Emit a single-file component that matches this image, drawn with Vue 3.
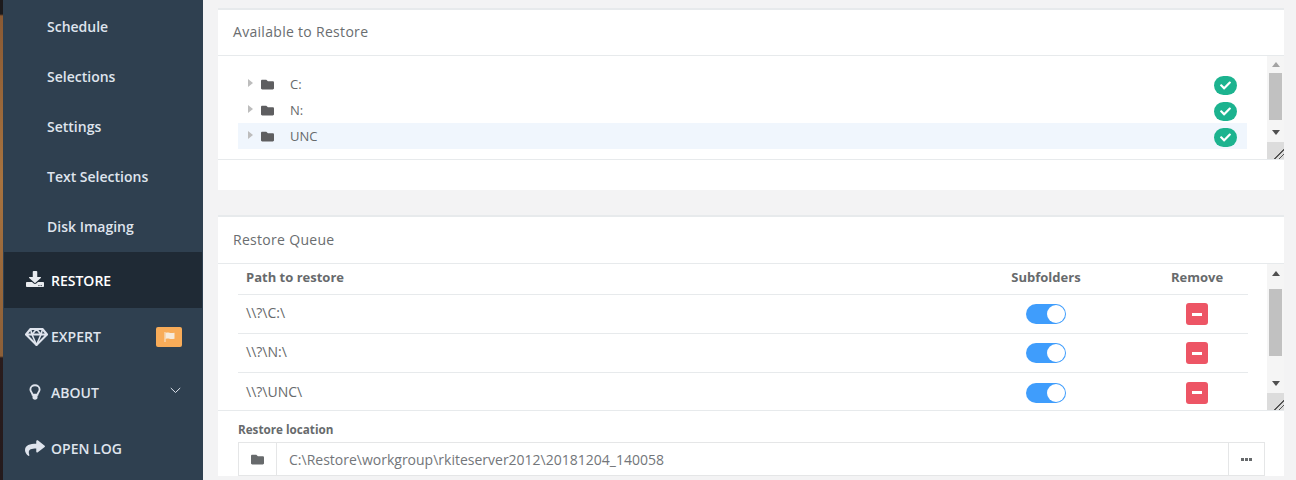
<script setup>
const navSub = ['Schedule', 'Selections', 'Settings', 'Text Selections', 'Disk Imaging']
const tree = [
  { name: 'C:', active: false },
  { name: 'N:', active: false },
  { name: 'UNC', active: true }
]
const queue = ['\\\\?\\C:\\', '\\\\?\\N:\\', '\\\\?\\UNC\\']
const folder = 'M464 128H272l-64-64H48C21.49 64 0 85.49 0 112v288c0 26.51 21.49 48 48 48h416c26.51 0 48-21.49 48-48V176c0-26.51-21.49-48-48-48z'
const check = 'M173.898 439.404l-166.4-166.4c-9.997-9.997-9.997-26.206 0-36.204l36.203-36.204c9.997-9.998 26.207-9.998 36.204 0L192 312.69 432.095 72.596c9.997-9.997 26.207-9.997 36.204 0l36.203 36.204c9.997 9.997 9.997 26.206 0 36.204l-294.4 294.401c-9.998 9.997-26.207 9.997-36.204-.001z'
</script>

<template>
  <div class="root">
    <div class="strip"></div>
    <aside class="side">
      <a v-for="n in navSub" :key="n" class="sub">{{ n }}</a>
      <a class="top active">
        <span class="ic"><svg width="18" height="16" viewBox="0 0 512 512" preserveAspectRatio="none"><path fill="currentColor" d="M216 0h80c13.3 0 24 10.7 24 24v168h87.7c17.8 0 26.7 21.5 14.1 34.1L269.7 378.3c-7.5 7.5-19.8 7.5-27.3 0L90.1 226.1c-12.6-12.6-3.7-34.1 14.1-34.1H192V24c0-13.3 10.7-24 24-24zm296 376v112c0 13.3-10.7 24-24 24H24c-13.3 0-24-10.7-24-24V376c0-13.3 10.7-24 24-24h146.7l49 49c20.1 20.1 52.500 20.1 72.6 0l49-49H488c13.3 0 24 10.7 24 24zm-124 88c0-11-9-20-20-20s-20 9-20 20 9 20 20 20 20-9 20-20zm64 0c0-11-9-20-20-20s-20 9-20 20 9 20 20 20 20-9 20-20z"/></svg></span>
        RESTORE
      </a>
      <a class="top">
        <span class="ic dia"><svg width="23" height="18" viewBox="0 0 23 18" fill="none" stroke="currentColor" stroke-width="2.100" stroke-linejoin="round"><path d="M5.500 1h12l4.500 5.500L11.500 17 1 6.500zM1 6.500h21"/><path stroke-width="1.600" d="M7 6.500L11.500 17 16 6.500M5.500 1L7 6.500 11.500 1 16 6.500 17.500 1"/></svg></span>
        EXPERT
        <span class="flag"><svg width="13" height="12" viewBox="0 0 12 12"><path fill="currentColor" d="M1 1h1v10H1zM2.300 2c2.500-1.200 4.200 .9 8.700-.3v6c-4.500 1.200-6.200-.9-8.700 .3z"/></svg></span>
      </a>
      <a class="top">
        <span class="ic"><svg width="12" height="16" viewBox="0 0 13 17" fill="none" stroke="currentColor" stroke-width="2"><path d="M6.500 1.200C3.800 1.200 1.500 3.200 1.500 5.800c0 2.400 1.900 3.300 2.400 5.700h5.200c.5-2.400 2.400-3.300 2.400-5.700 0-2.600-2.300-4.600-5-4.600z"/><path fill="currentColor" stroke="none" d="M3.800 11.500h5.400v3.300c0 .8-1 2.200-2.700 2.200s-2.700-1.400-2.700-2.200z"/></svg></span>
        ABOUT
        <svg class="chev" width="11" height="7" viewBox="0 0 11 7" fill="none" stroke="currentColor" stroke-width="1"><path d="M.8 1l4.700 4.500L10.200 1"/></svg>
      </a>
      <a class="top">
        <span class="ic"><svg width="20" height="18" viewBox="0 0 512 512" preserveAspectRatio="none"><path fill="currentColor" d="M503.691 189.836L327.687 37.851C312.281 24.546 288 35.347 288 56.015v80.053C127.371 137.907 0 170.1 0 322.326c0 61.441 39.581 122.309 83.333 154.132 13.653 9.931 33.111-2.533 28.077-18.631C66.066 312.814 132.917 274.316 288 272.085V360c0 20.7 24.3 31.453 39.687 18.164l176.004-152c11.071-9.562 11.086-26.753 0-36.328z"/></svg></span>
        OPEN LOG
      </a>
    </aside>

    <main class="main">
      <section class="panel first">
        <h5 class="title">Available to Restore</h5>
        <div class="scroll h1">
          <div class="scroll-body tree">
            <div v-for="t in tree" :key="t.name" class="node" :class="{ on: t.active }">
              <i class="caret"></i>
              <svg class="fold" width="13" height="13" viewBox="0 0 512 512"><path fill="currentColor" :d="folder"/></svg>
              <span class="nm">{{ t.name }}</span>
              <span class="pill"><svg width="11" height="11" viewBox="0 0 512 512"><path fill="currentColor" :d="check"/></svg></span>
            </div>
          </div>
          <div class="bar">
            <i class="up"></i>
            <div class="track"><div class="thumb t1"></div></div>
            <i class="down"></i>
            <div class="grip"></div>
          </div>
        </div>
        <div class="foot"></div>
      </section>

      <section class="panel second">
        <h5 class="title">Restore Queue</h5>
        <div class="scroll h2">
          <div class="scroll-body">
            <div class="row head">
              <span class="c-path">Path to restore</span>
              <span class="c-sub">Subfolders</span>
              <span class="c-rem">Remove</span>
            </div>
            <div v-for="q in queue" :key="q" class="row">
              <span class="c-path">{{ q }}</span>
              <span class="c-sub"><span class="toggle"><i></i></span></span>
              <span class="c-rem"><span class="minus"><i></i></span></span>
            </div>
          </div>
          <div class="bar">
            <i class="up"></i>
            <div class="track"><div class="thumb t2"></div></div>
            <i class="down"></i>
            <div class="grip"></div>
          </div>
        </div>
        <div class="loc">
          <label>Restore location</label>
          <div class="group">
            <span class="addon"><svg width="13" height="13" viewBox="0 0 512 512"><path fill="currentColor" :d="folder"/></svg></span>
            <span class="input">C:\Restore\workgroup\rkiteserver2012\20181204_140058</span>
            <span class="btn"><i></i><i></i><i></i></span>
          </div>
        </div>
      </section>
    </main>
  </div>
</template>

<style>
html, body { margin: 0; background: #f3f3f4; }
</style>

<style scoped>
.root { display: flex; width: 1296px; height: 480px; overflow: hidden; background: #f3f3f4; font-family: "Open Sans", sans-serif; color: #676a6c; }
.strip { width: 3px; flex: none; background: linear-gradient(180deg, #1c1a1c 0, #1c1a1c 14px, #8a5a34 16px, #a8733f 180px, #8c5f38 356px, #2a1c1c 358px, #241a1c 480px); }
.side { width: 200px; flex: none; background: #2f4050; padding-top: 2px; box-sizing: border-box; }
.sub { display: block; height: 50px; line-height: 50px; padding-left: 44px; font-size: 14px; font-weight: 600; color: #dfe4ed; }
.top { display: flex; align-items: center; height: 56px; padding-left: 48px; position: relative; font-size: 14px; font-weight: 600; color: #dfe4ed; box-sizing: border-box; }
.top.active { background: #1f2a35; color: #fff; margin: 0 1px; padding-left: 47px; }
.ic { position: absolute; left: 19px; top: 0; width: 26px; height: 100%; display: flex; align-items: center; justify-content: center; }
.active .ic { left: 18px; top: -1px; color: #e8ebef; }
.dia { left: 20px; top: 1px; }
.flag { position: absolute; left: 153px; top: 19px; width: 26px; height: 20px; background: #f8ac59; border-radius: 2px; color: #f6eadb; display: flex; align-items: center; justify-content: center; }
.chev { position: absolute; left: 167px; top: 23px; }
.main { flex: 1; padding: 8px 12px 0 15px; min-width: 0; }
.panel { background: #fff; border-top: 2px solid #e7eaec; }
.first { margin-bottom: 25px; }
.title { margin: 0; height: 45px; line-height: 44px; padding-left: 15px; font-size: 14px; font-weight: 500; letter-spacing: .3px; color: #6a6d70; border-bottom: 1px solid #e7eaec; }
.second .title { height: 46px; line-height: 46px; }
.scroll { display: flex; border-bottom: 1px solid #e7eaec; box-sizing: border-box; }
.h1 { height: 104px; }
.h2 { height: 147px; }
.foot { height: 30px; }
.scroll-body { flex: 1; min-width: 0; padding: 0 20px; }
.tree { padding-top: 15px; padding-right: 20px; }
.node { display: flex; align-items: center; height: 26px; position: relative; font-size: 13px; color: #676a6c; }
.node.on { background: #f0f6fd; }
.caret { width: 0; height: 0; border-left: 5px solid #bdbdbd; border-top: 4px solid transparent; border-bottom: 4px solid transparent; margin-left: 10px; position: relative; top: -1px; }
.fold { margin-left: 8px; color: #5e5e60; }
.nm { margin-left: 16px; }
.pill { position: absolute; right: 10px; top: 5px; width: 23px; height: 19px; background: #1cb38f; border-radius: 10px; color: #fff; display: flex; align-items: center; justify-content: center; }
.bar { width: 17px; flex: none; display: flex; flex-direction: column; align-items: center; background: #f5f5f5; }
.up { margin-top: 6px; width: 0; height: 0; border-bottom: 5px solid #a3a3a3; border-left: 4px solid transparent; border-right: 4px solid transparent; }
.second .up { border-bottom-color: #505050; margin-top: 7px; }
.track { flex: 1; width: 100%; display: flex; justify-content: center; }
.thumb { width: 13px; background: #c1c1c1; }
.t1 { height: 47px; margin-top: 6px; }
.t2 { height: 67px; margin-top: 13px; }
.down { margin-bottom: 7px; width: 0; height: 0; border-top: 5px solid #505050; border-left: 4px solid transparent; border-right: 4px solid transparent; }
.grip { width: 17px; height: 17px; background: #dcdcdc linear-gradient(135deg, transparent 0, transparent 70%, #555 70%, #555 74%, transparent 74%, transparent 84%, #555 84%, #555 88%, transparent 88%); }
.row { display: flex; align-items: center; height: 39px; width: 1010px; border-bottom: 1px solid #e7eaec; box-sizing: border-box; font-size: 14px; color: #676a6c; }
.row:last-child { border-bottom: 0; }
.row.head { height: 31px; font-size: 13px; font-weight: 700; }
.row.head span { padding-bottom: 4px; }
.c-path { flex: none; width: 758px; padding-left: 8px; padding-bottom: 3px; box-sizing: border-box; }
.c-sub { flex: none; width: 100px; display: flex; justify-content: center; }
.c-rem { flex: none; width: 102px; margin-left: 50px; display: flex; justify-content: center; }
.toggle { width: 40px; height: 20px; border-radius: 10px; background: #3f9dfc; position: relative; display: block; }
.toggle i { position: absolute; right: 1px; top: 1px; width: 18px; height: 18px; border-radius: 50%; background: #fff; }
.minus { width: 22px; height: 22px; border-radius: 3px; background: #ed5565; display: flex; align-items: center; justify-content: center; }
.minus i { width: 10px; height: 3px; background: #fff; }
.loc { padding: 11px 19px 0 20px; }
.loc label { display: block; font-size: 11.7px; font-weight: 700; line-height: 14px; color: #676a6c; margin-bottom: 6px; }
.group { display: flex; height: 34px; border: 1px solid #e5e6e7; box-sizing: border-box; font-size: 14px; color: #73767a; }
.addon { width: 37px; flex: none; border-right: 1px solid #e5e6e7; display: flex; align-items: center; justify-content: center; color: #676a6c; }
.input { flex: 1; line-height: 34px; padding-left: 12px; }
.btn { width: 35px; flex: none; border-left: 1px solid #e5e6e7; display: flex; align-items: center; justify-content: center; gap: 1px; }
.btn i { width: 3px; height: 3px; background: #676a6c; }
</style>
